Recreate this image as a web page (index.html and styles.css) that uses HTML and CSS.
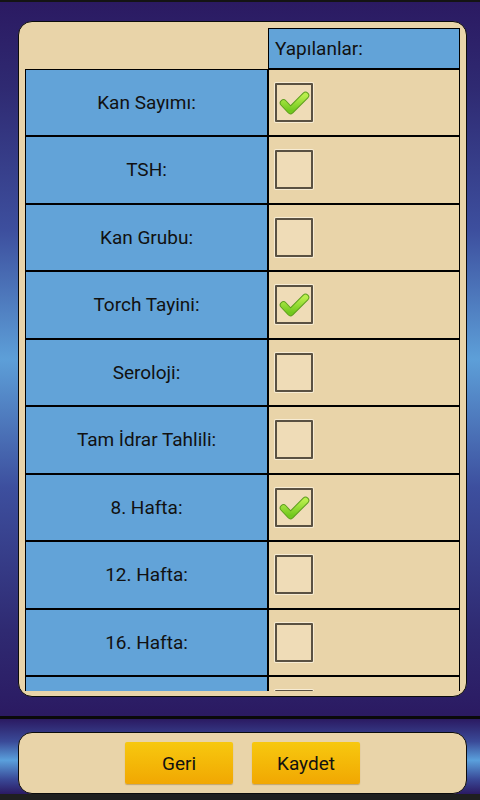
FILE: index.html
```html
<!DOCTYPE html>
<html lang="tr">
<head>
<meta charset="utf-8">
<title>Tahliller</title>
<link rel="stylesheet" href="styles.css">
</head>
<body>
<div class="screen">
  <div class="status"></div>
  <div class="main">
    <div class="card">
      <div class="scroll">
        <div class="table">
          <div class="cell empty"></div>
          <div class="cell head">Yapılanlar:</div>

          <div class="cell label">Kan Sayımı:</div>
          <div class="cell check"><span class="box"><svg class="tick" viewBox="0 0 38 39"><path class="tick-edge" d="M8.5 20 L15.5 27.5 L30.5 12.5"/><path class="tick-fill" d="M8.5 20 L15.5 27.5 L30.5 12.5"/></svg></span></div>

          <div class="cell label">TSH:</div>
          <div class="cell check"><span class="box"></span></div>

          <div class="cell label">Kan Grubu:</div>
          <div class="cell check"><span class="box"></span></div>

          <div class="cell label">Torch Tayini:</div>
          <div class="cell check"><span class="box"><svg class="tick" viewBox="0 0 38 39"><path class="tick-edge" d="M8.5 20 L15.5 27.5 L30.5 12.5"/><path class="tick-fill" d="M8.5 20 L15.5 27.5 L30.5 12.5"/></svg></span></div>

          <div class="cell label">Seroloji:</div>
          <div class="cell check"><span class="box"></span></div>

          <div class="cell label">Tam İdrar Tahlili:</div>
          <div class="cell check"><span class="box"></span></div>

          <div class="cell label">8. Hafta:</div>
          <div class="cell check"><span class="box"><svg class="tick" viewBox="0 0 38 39"><path class="tick-edge" d="M8.5 20 L15.5 27.5 L30.5 12.5"/><path class="tick-fill" d="M8.5 20 L15.5 27.5 L30.5 12.5"/></svg></span></div>

          <div class="cell label">12. Hafta:</div>
          <div class="cell check"><span class="box"></span></div>

          <div class="cell label">16. Hafta:</div>
          <div class="cell check"><span class="box"></span></div>

          <div class="cell label"></div>
          <div class="cell check"><span class="box"></span></div>
        </div>
      </div>
    </div>
  </div>
  <div class="divider"></div>
  <div class="footer">
    <div class="panel">
      <button class="btn">Geri</button>
      <button class="btn">Kaydet</button>
    </div>
  </div>
  <div class="navstrip"></div>
</div>
<svg width="0" height="0" class="defs">
  <defs>
    <linearGradient id="tickGrad" x1="0" y1="0" x2="0" y2="1">
      <stop offset="0" stop-color="#b8ee4c"/>
      <stop offset="1" stop-color="#72c81e"/>
    </linearGradient>
  </defs>
</svg>
</body>
</html>
```

FILE: styles.css
```css
* { box-sizing: border-box; }

html, body {
  margin: 0;
  padding: 0;
  width: 480px;
  height: 800px;
  overflow: hidden;
  background: #1e1e1e;
  font-family: Roboto, "Liberation Sans", sans-serif;
}

.defs { position: absolute; width: 0; height: 0; }

.screen {
  width: 480px;
  height: 800px;
  display: flex;
  flex-direction: column;
}

.status {
  height: 2px;
  background: #141414;
}

.main {
  height: 714px;
  padding: 19px 13px 19px 18px;
  background: linear-gradient(to bottom,
    #2b1a62 0%,
    #2f2a72 12%,
    #3d4f9e 32%,
    #5d9fd8 50%,
    #3d4f9e 68%,
    #2f2a72 88%,
    #2b1a62 100%);
}

.card {
  height: 676px;
  width: 449px;
  background: #e9d4a9;
  border: 1px solid #0c0c0c;
  border-radius: 14px;
  padding: 6px 6px 5px 6px;
}

.scroll {
  height: 663px;
  overflow: hidden;
}

.table {
  display: grid;
  grid-template-columns: 243px 192px;
  grid-template-rows: 40.5px repeat(10, 67.5px);
}

.cell {
  border: 1px solid #000;
  display: flex;
  align-items: center;
  font-size: 19px;
  color: #111;
}

.empty {
  border: none;
}

.head {
  background: #62a3d8;
  padding-left: 6px;
}

.label {
  background: #62a3d8;
  justify-content: center;
}

.check {
  background: #e9d4a9;
  padding-left: 6px;
}

.box {
  position: relative;
  width: 38px;
  height: 39px;
  border: 2px solid #5a5142;
  border-radius: 1px;
  background: #efdcb7;
  box-shadow: 0 0 0 1px #f7ecd4;
}

.tick {
  position: absolute;
  left: -2px;
  top: -2px;
  width: 38px;
  height: 39px;
  overflow: visible;
}

.tick-edge {
  fill: none;
  stroke: #5e9e1e;
  stroke-width: 7.5;
  stroke-linecap: round;
  stroke-linejoin: round;
}

.tick-fill {
  fill: none;
  stroke: url(#tickGrad);
  stroke-width: 5.5;
  stroke-linecap: round;
  stroke-linejoin: round;
}

.divider {
  height: 3px;
  background: #0a0a0a;
}

.footer {
  height: 75px;
  padding: 13px 13px 0 18px;
  background: linear-gradient(to bottom,
    #2b1a62 0%,
    #3a4a98 30%,
    #5aa0dc 55%,
    #3a4a98 80%,
    #2b1a62 100%);
}

.panel {
  width: 449px;
  height: 62px;
  background: #e9d4a9;
  border: 1px solid #0c0c0c;
  border-radius: 14px;
  display: flex;
  justify-content: center;
  align-items: center;
  gap: 19px;
}

.btn {
  width: 108px;
  height: 42px;
  border: none;
  border-radius: 2px;
  background: linear-gradient(to bottom, #f7c810 0%, #f4b808 50%, #f1a702 100%);
  box-shadow: 0 1px 1px rgba(120, 80, 0, 0.35);
  font-family: Roboto, "Liberation Sans", sans-serif;
  font-size: 19px;
  color: #111;
  padding: 0;
}

.navstrip {
  height: 6px;
  background: #1f1f1f;
}
```
